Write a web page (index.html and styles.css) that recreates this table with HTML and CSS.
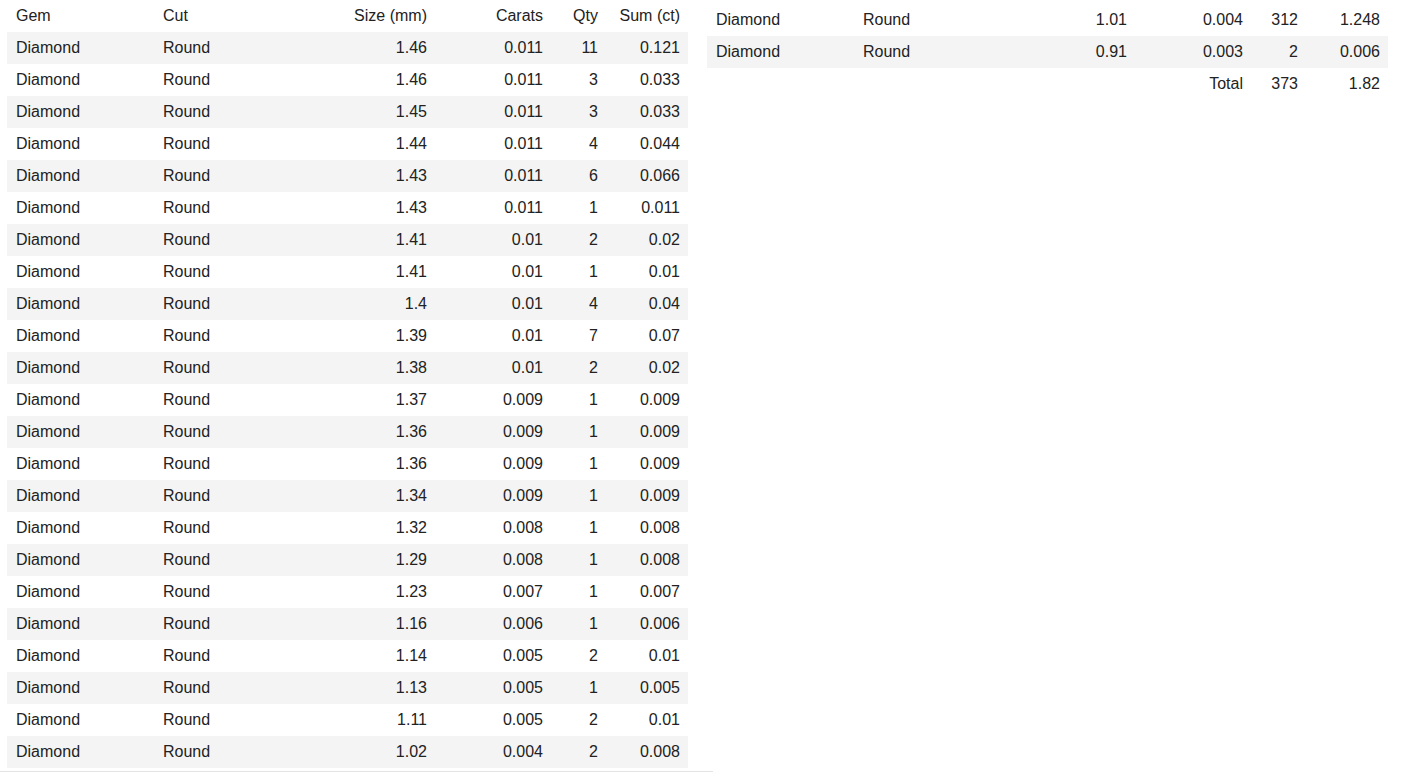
FILE: index.html
```html
<!DOCTYPE html>
<html>
<head>
<meta charset="utf-8">
<link rel="stylesheet" href="styles.css">
</head>
<body>
<div class="page">
  <div class="panel panel-left">
    <table class="gems">
      <colgroup><col class="c-gem"><col class="c-cut"><col class="c-size"><col class="c-ct"><col class="c-qty"><col class="c-sum"></colgroup>
      <thead>
        <tr><th>Gem</th><th>Cut</th><th class="num">Size (mm)</th><th class="num">Carats</th><th class="num">Qty</th><th class="num">Sum (ct)</th></tr>
      </thead>
      <tbody class="stripe-odd">
        <tr><td>Diamond</td><td>Round</td><td class="num">1.46</td><td class="num">0.011</td><td class="num">11</td><td class="num">0.121</td></tr>
        <tr><td>Diamond</td><td>Round</td><td class="num">1.46</td><td class="num">0.011</td><td class="num">3</td><td class="num">0.033</td></tr>
        <tr><td>Diamond</td><td>Round</td><td class="num">1.45</td><td class="num">0.011</td><td class="num">3</td><td class="num">0.033</td></tr>
        <tr><td>Diamond</td><td>Round</td><td class="num">1.44</td><td class="num">0.011</td><td class="num">4</td><td class="num">0.044</td></tr>
        <tr><td>Diamond</td><td>Round</td><td class="num">1.43</td><td class="num">0.011</td><td class="num">6</td><td class="num">0.066</td></tr>
        <tr><td>Diamond</td><td>Round</td><td class="num">1.43</td><td class="num">0.011</td><td class="num">1</td><td class="num">0.011</td></tr>
        <tr><td>Diamond</td><td>Round</td><td class="num">1.41</td><td class="num">0.01</td><td class="num">2</td><td class="num">0.02</td></tr>
        <tr><td>Diamond</td><td>Round</td><td class="num">1.41</td><td class="num">0.01</td><td class="num">1</td><td class="num">0.01</td></tr>
        <tr><td>Diamond</td><td>Round</td><td class="num">1.4</td><td class="num">0.01</td><td class="num">4</td><td class="num">0.04</td></tr>
        <tr><td>Diamond</td><td>Round</td><td class="num">1.39</td><td class="num">0.01</td><td class="num">7</td><td class="num">0.07</td></tr>
        <tr><td>Diamond</td><td>Round</td><td class="num">1.38</td><td class="num">0.01</td><td class="num">2</td><td class="num">0.02</td></tr>
        <tr><td>Diamond</td><td>Round</td><td class="num">1.37</td><td class="num">0.009</td><td class="num">1</td><td class="num">0.009</td></tr>
        <tr><td>Diamond</td><td>Round</td><td class="num">1.36</td><td class="num">0.009</td><td class="num">1</td><td class="num">0.009</td></tr>
        <tr><td>Diamond</td><td>Round</td><td class="num">1.36</td><td class="num">0.009</td><td class="num">1</td><td class="num">0.009</td></tr>
        <tr><td>Diamond</td><td>Round</td><td class="num">1.34</td><td class="num">0.009</td><td class="num">1</td><td class="num">0.009</td></tr>
        <tr><td>Diamond</td><td>Round</td><td class="num">1.32</td><td class="num">0.008</td><td class="num">1</td><td class="num">0.008</td></tr>
        <tr><td>Diamond</td><td>Round</td><td class="num">1.29</td><td class="num">0.008</td><td class="num">1</td><td class="num">0.008</td></tr>
        <tr><td>Diamond</td><td>Round</td><td class="num">1.23</td><td class="num">0.007</td><td class="num">1</td><td class="num">0.007</td></tr>
        <tr><td>Diamond</td><td>Round</td><td class="num">1.16</td><td class="num">0.006</td><td class="num">1</td><td class="num">0.006</td></tr>
        <tr><td>Diamond</td><td>Round</td><td class="num">1.14</td><td class="num">0.005</td><td class="num">2</td><td class="num">0.01</td></tr>
        <tr><td>Diamond</td><td>Round</td><td class="num">1.13</td><td class="num">0.005</td><td class="num">1</td><td class="num">0.005</td></tr>
        <tr><td>Diamond</td><td>Round</td><td class="num">1.11</td><td class="num">0.005</td><td class="num">2</td><td class="num">0.01</td></tr>
        <tr><td>Diamond</td><td>Round</td><td class="num">1.02</td><td class="num">0.004</td><td class="num">2</td><td class="num">0.008</td></tr>
      </tbody>
    </table>
  </div>
  <div class="panel panel-right">
    <table class="gems">
      <colgroup><col class="c-gem"><col class="c-cut"><col class="c-size"><col class="c-ct"><col class="c-qty"><col class="c-sum"></colgroup>
      <tbody class="stripe-even">
        <tr><td>Diamond</td><td>Round</td><td class="num">1.01</td><td class="num">0.004</td><td class="num">312</td><td class="num">1.248</td></tr>
        <tr><td>Diamond</td><td>Round</td><td class="num">0.91</td><td class="num">0.003</td><td class="num">2</td><td class="num">0.006</td></tr>
      </tbody>
      <tfoot>
        <tr><td></td><td></td><td></td><td class="num">Total</td><td class="num">373</td><td class="num">1.82</td></tr>
      </tfoot>
    </table>
  </div>
</div>
</body>
</html>
```

FILE: styles.css
```css
html, body {
  margin: 0;
  padding: 0;
  background: #ffffff;
}

body {
  font-family: "Liberation Sans", Arial, sans-serif;
  font-size: 16px;
  color: #222222;
}

.page {
  display: flex;
  align-items: flex-start;
}

.panel-left {
  width: 706px;
  padding-left: 7px;
  padding-bottom: 3px;
  border-bottom: 1px solid #e4e4e4;
}

.panel-right {
  margin-left: -6px;
  padding-top: 4px;
}

.gems {
  width: 681px;
  border-collapse: collapse;
  table-layout: fixed;
}

.c-gem { width: 147px; }
.c-cut { width: 141px; }
.c-size { width: 140px; }
.c-ct { width: 116px; }
.c-qty { width: 55px; }
.c-sum { width: 82px; }

.gems th,
.gems td {
  height: 32px;
  padding: 0 8px 0 9px;
  box-sizing: border-box;
  text-align: left;
  font-weight: normal;
  line-height: 18px;
  white-space: nowrap;
  vertical-align: middle;
}

.gems th.num,
.gems td.num {
  text-align: right;
}

.stripe-odd tr:nth-child(odd) { background: #f4f4f4; }
.stripe-even tr:nth-child(even) { background: #f4f4f4; }
```
